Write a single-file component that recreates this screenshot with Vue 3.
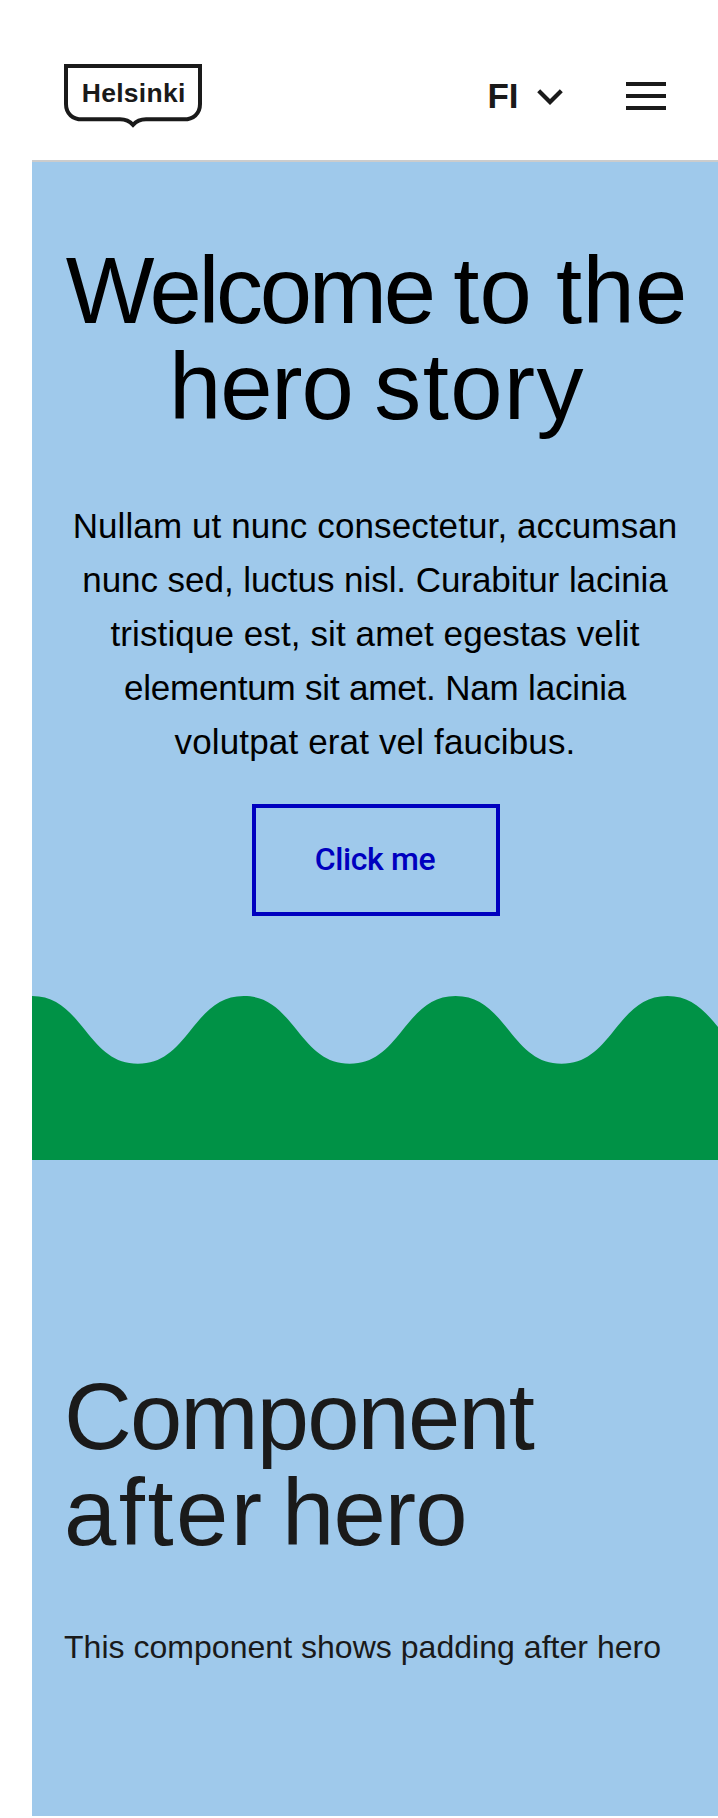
<script setup>
const peaks = 4
// One full wave period, peak to peak
const period = 'c24 0 37 14 53 34 c16 20 29 33.7 52.9 33.7 c24 0 37 -13.7 52.9 -33.7 c16 -20 29 -34 53 -34'
const wavePath = `M0 0 ${Array(peaks).fill(period).join(' ')} V164 H0 Z`
const heroLines = [
  'Nullam ut nunc consectetur, accumsan',
  'nunc sed, luctus nisl. Curabitur lacinia',
  'tristique est, sit amet egestas velit',
  'elementum sit amet. Nam lacinia',
  'volutpat erat vel faucibus.',
]
</script>

<template>
  <div class="page">
    <header class="header">
      <svg class="logo" width="138" height="64" viewBox="0 0 138 64" aria-label="Helsinki">
        <path d="M2 2 H136 V40 C136 50 129 55.3 120 55.3 H82 C76 55.3 72 57.5 69 60.8 C66 57.5 62 55.3 56 55.3 H18 C9 55.3 2 50 2 40 Z" fill="none" stroke="#1a1a1a" stroke-width="4" />
        <text x="17.8" y="38" textLength="103.5" class="logo-text">Helsinki</text>
      </svg>
      <div class="actions">
        <button class="language">
          <span>FI</span>
          <svg width="28" height="18" viewBox="0 0 28 18"><path d="M2.7 2.7 L14 14 L25.3 2.7" fill="none" stroke="#1a1a1a" stroke-width="4.2" /></svg>
        </button>
        <button class="menu" aria-label="Menu"><i></i><i></i><i></i></button>
      </div>
    </header>
    <main>
      <section class="hero">
        <h1>
          <span class="line nudged"><b class="welcome">Welcome</b><b class="to-the"> to the</b></span>
          <span class="line shifted"><b class="hero-word">hero</b><b class="story"> story</b></span>
        </h1>
        <p><span v-for="(line, i) in heroLines" :key="i" class="line" :class="'p' + i">{{ line }}</span></p>
        <button class="cta">Click me</button>
      </section>
      <svg class="wave" width="686" height="164" viewBox="0 0 686 164"><path :d="wavePath" fill="#009246" /></svg>
      <section class="after">
        <h2>
          <span class="line component">Component</span>
          <span class="line"><b class="after-word">after</b><b class="hero-end"> hero</b></span>
        </h2>
        <p>This component shows padding after hero</p>
      </section>
    </main>
  </div>
</template>

<style>
html, body { background: #fff; }
</style>

<style scoped>
.page { box-sizing: border-box; width: 718px; height: 1818px; padding-left: 32px; overflow: hidden; color: #1a1a1a; font-family: "Liberation Sans", Arial, sans-serif; }
button { margin: 0; padding: 0; border: 0; border-radius: 0; background: none; color: inherit; font-family: inherit; }
.header { box-sizing: border-box; height: 162px; padding: 64px 52px 0 32px; border-bottom: 2px solid #ccc; display: flex; justify-content: space-between; align-items: flex-start; }
.logo { display: block; }
.logo-text { font: 700 26.5px "Liberation Sans", Arial, sans-serif; fill: #1a1a1a; }
.actions { display: flex; gap: 62px; height: 64px; align-items: center; }
.language { display: flex; align-items: center; gap: 17.5px; font-size: 35px; line-height: 40px; font-weight: 700; }
.language svg { display: block; margin-top: 2px; }
.menu { width: 40px; display: flex; flex-direction: column; gap: 8px; }
.menu i { height: 4px; background: #1a1a1a; }
main { height: 1654px; background: #9fc9eb; }
.hero { box-sizing: border-box; height: 834px; padding-top: 81px; display: flex; flex-direction: column; align-items: center; color: #000; }
h1, h2, p { margin: 0; font-weight: 400; }
h1, h2 { font-size: 94px; line-height: 96px; }
b { font-weight: 400; }
.line { display: block; white-space: pre; }
h1 { text-align: center; }
.nudged { padding-left: 3.5px; }
.shifted { padding-left: 4px; }
.welcome { margin-right: -3.5px; letter-spacing: -3.3px; }
.to-the { letter-spacing: .3px; word-spacing: -2.5px; }
.hero-word { letter-spacing: -1.1px; }
.story { letter-spacing: 1.4px; word-spacing: -6px; }
.component { letter-spacing: -1.9px; }
.after-word { letter-spacing: 2.5px; }
.hero-end { letter-spacing: -.8px; word-spacing: -8px; }
.hero p { margin-top: 64px; text-align: center; font-size: 35px; line-height: 54px; }
.p0 { letter-spacing: .1px; }
.p1 { letter-spacing: -.05px; }
.p2 { letter-spacing: .1px; }
.p3 { letter-spacing: -.18px; }
.p4 { letter-spacing: .15px; }
.cta { box-sizing: border-box; width: 248px; height: 112px; margin: 35px 0 0 2px; padding: 0 2px 2px 0; border: 4px solid #0000bf; color: #0000bf; font: 500 32px Roboto, sans-serif; letter-spacing: -.4px; }
.wave { display: block; }
.after { padding: 209px 32px 0; }
.after p { margin-top: 62px; font-size: 32px; line-height: 48px; letter-spacing: .03px; white-space: nowrap; }
</style>
